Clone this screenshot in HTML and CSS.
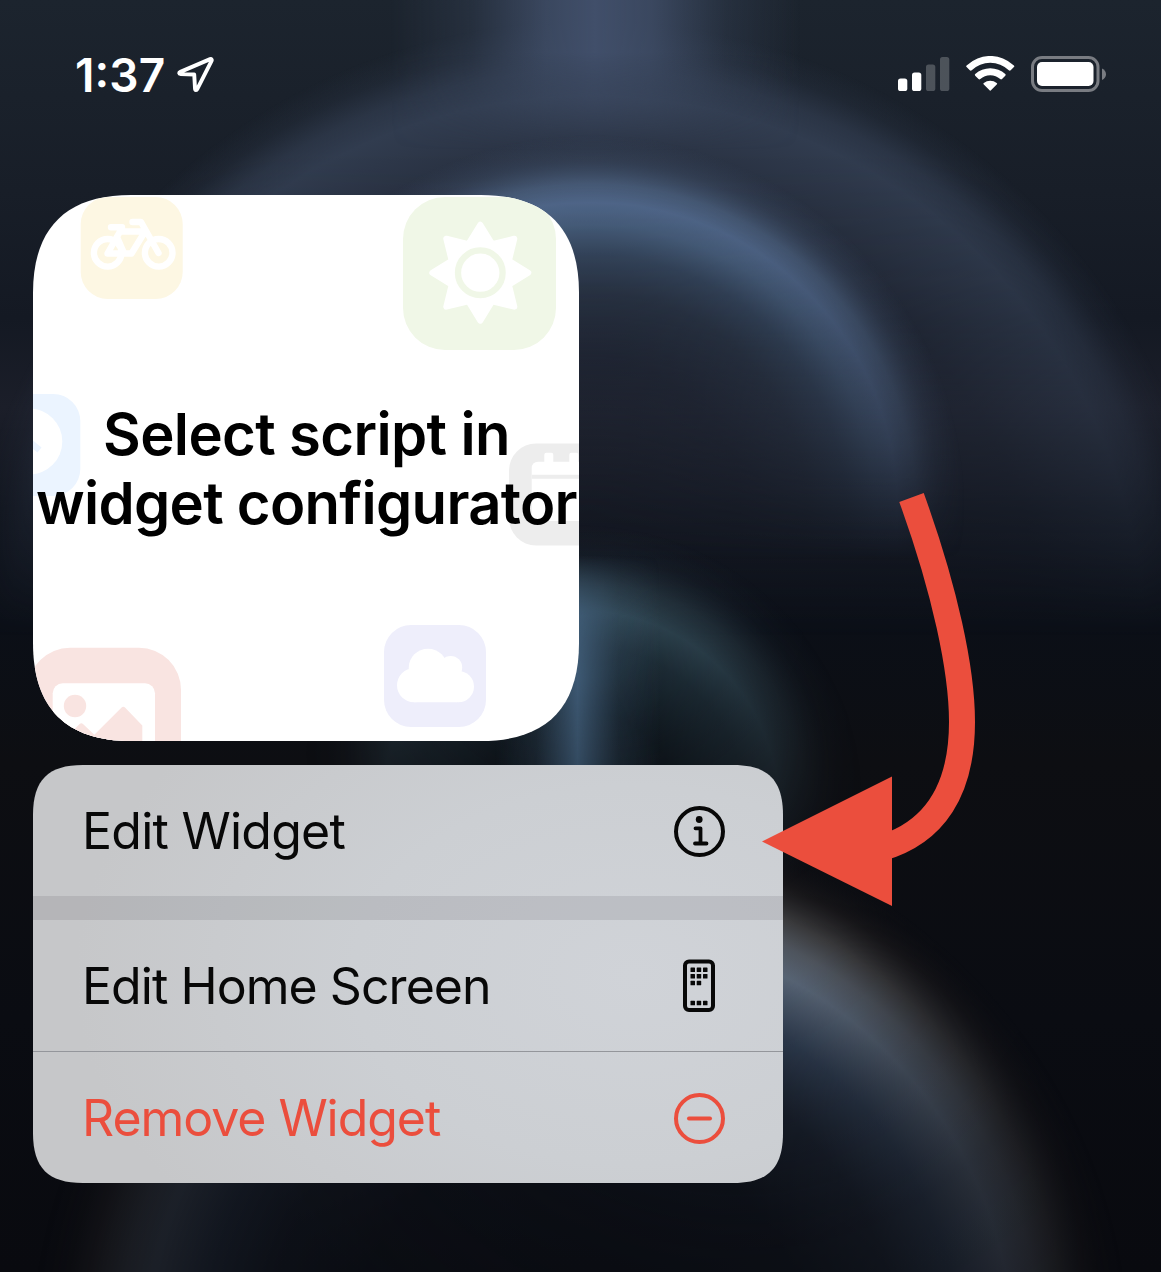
FILE: index.html
```html
<!DOCTYPE html>
<html lang="en">
<head>
<meta charset="utf-8">
<title>Home Screen</title>
<link rel="stylesheet" href="styles.css">
</head>
<body>
<main class="screen">
  <svg class="wallpaper" viewBox="0 0 1161 1272" aria-hidden="true">
    <defs>
      <linearGradient id="base" x1="0" y1="0" x2="0" y2="1">
        <stop offset="0" stop-color="#1c242e"/><stop offset=".15" stop-color="#181e28"/>
        <stop offset=".25" stop-color="#141923"/><stop offset=".32" stop-color="#1b1e29"/>
        <stop offset=".4" stop-color="#11151e"/><stop offset=".49" stop-color="#0b0f17"/>
        <stop offset=".6" stop-color="#0d0e12"/><stop offset=".8" stop-color="#0a0c12"/>
        <stop offset="1" stop-color="#090a0f"/>
      </linearGradient>
      <linearGradient id="beam">
        <stop offset="0" stop-color="#3f4d66" stop-opacity="0"/><stop offset=".2" stop-color="#3f4d66" stop-opacity=".3"/>
        <stop offset=".38" stop-color="#404e68" stop-opacity=".85"/><stop offset=".5" stop-color="#414f6a"/>
        <stop offset=".64" stop-color="#404e68" stop-opacity=".85"/><stop offset=".82" stop-color="#3f4d66" stop-opacity=".3"/>
        <stop offset="1" stop-color="#3f4d66" stop-opacity="0"/>
      </linearGradient>
      <linearGradient id="beamFade" x1="0" y1="0" x2="0" y2="1">
        <stop offset=".35" stop-color="#fff"/><stop offset="1" stop-color="#000"/>
      </linearGradient>
      <mask id="beamMask"><rect width="1161" height="150" fill="url(#beamFade)"/></mask>
      <radialGradient id="disc" gradientUnits="userSpaceOnUse" cx="590" cy="650" r="630">
        <stop offset="0" stop-color="#1c202b"/><stop offset=".55" stop-color="#1f2431"/>
        <stop offset=".72" stop-color="#242b3a"/><stop offset=".8" stop-color="#2b3445"/>
        <stop offset=".88" stop-color="#313c4f"/><stop offset=".92" stop-color="#313c4f" stop-opacity=".75"/>
        <stop offset=".96" stop-color="#313c4f" stop-opacity=".25"/><stop offset="1" stop-color="#313c4f" stop-opacity="0"/>
      </radialGradient>
      <linearGradient id="discFade" x1="0" y1="0" x2="0" y2="1">
        <stop offset=".12" stop-color="#fff"/><stop offset=".22" stop-color="#cecece"/>
        <stop offset=".3" stop-color="#989898"/><stop offset=".36" stop-color="#707070"/><stop offset=".5" stop-color="#000"/>
      </linearGradient>
      <mask id="discMask"><rect width="1161" height="1272" fill="url(#discFade)"/></mask>
      <radialGradient id="ring" gradientUnits="userSpaceOnUse" cx="590" cy="510" r="375">
        <stop offset="0" stop-color="#1f2330" stop-opacity=".4"/><stop offset=".4" stop-color="#222938" stop-opacity=".8"/>
        <stop offset=".58" stop-color="#2a3546"/><stop offset=".68" stop-color="#35465d"/>
        <stop offset=".76" stop-color="#475e7c"/><stop offset=".82" stop-color="#50678a"/>
        <stop offset=".87" stop-color="#4b607e" stop-opacity=".85"/><stop offset=".93" stop-color="#42536d" stop-opacity=".4"/>
        <stop offset="1" stop-color="#3a4860" stop-opacity="0"/>
      </radialGradient>
      <linearGradient id="fade" x1="0" y1="0" x2="0" y2="1">
        <stop offset=".14" stop-color="#fff"/><stop offset=".2" stop-color="#e0e0e0"/>
        <stop offset=".29" stop-color="#989898"/><stop offset=".35" stop-color="#686868"/><stop offset=".44" stop-color="#000"/>
      </linearGradient>
      <mask id="upper"><rect width="1161" height="1272" fill="url(#fade)"/></mask>
      <radialGradient id="planet" gradientUnits="userSpaceOnUse" cx="580" cy="1360" r="550">
        <stop offset="0" stop-color="#0b0e15"/><stop offset=".42" stop-color="#10151e"/>
        <stop offset=".58" stop-color="#1c2431"/><stop offset=".69" stop-color="#303e52"/>
        <stop offset=".79" stop-color="#5a6778"/><stop offset=".84" stop-color="#50565f"/>
        <stop offset=".885" stop-color="#3a3a3c"/><stop offset=".94" stop-color="#1c1a1c" stop-opacity=".7"/>
        <stop offset="1" stop-color="#0e0e12" stop-opacity="0"/>
      </radialGradient>
      <radialGradient id="light" gradientUnits="userSpaceOnUse" cx="740" cy="880" r="560">
        <stop offset="0" stop-color="#fff"/><stop offset=".2" stop-color="#f4f4f4"/><stop offset=".32" stop-color="#d0d0d0"/>
        <stop offset=".45" stop-color="#a0a0a0"/><stop offset=".65" stop-color="#686868"/><stop offset="1" stop-color="#3c3c3c"/>
      </radialGradient>
      <mask id="lit"><rect width="1161" height="1272" fill="url(#light)"/></mask>
      <radialGradient id="teal" gradientUnits="userSpaceOnUse" cx="580" cy="810" r="285">
        <stop offset="0" stop-color="#0e151b"/><stop offset=".35" stop-color="#101a21"/>
        <stop offset=".58" stop-color="#20313b"/><stop offset=".7" stop-color="#304753"/>
        <stop offset=".8" stop-color="#30444f" stop-opacity=".65"/><stop offset=".9" stop-color="#293a46" stop-opacity=".2"/>
        <stop offset="1" stop-color="#22303a" stop-opacity="0"/>
      </radialGradient>
      <radialGradient id="tealLight" gradientUnits="userSpaceOnUse" cx="600" cy="590" r="350">
        <stop offset="0" stop-color="#fff"/><stop offset=".35" stop-color="#c8c8c8"/><stop offset=".7" stop-color="#606060"/><stop offset="1" stop-color="#000"/>
      </radialGradient>
      <mask id="tealMask"><rect width="1161" height="1272" fill="url(#tealLight)"/></mask>
      <linearGradient id="streak">
        <stop offset="0" stop-color="#3f5a74" stop-opacity="0"/><stop offset=".25" stop-color="#3f5a74" stop-opacity=".3"/>
        <stop offset=".5" stop-color="#425f7b"/><stop offset=".75" stop-color="#3f5a74" stop-opacity=".3"/>
        <stop offset="1" stop-color="#3f5a74" stop-opacity="0"/>
      </linearGradient>
      <linearGradient id="streakFade" gradientUnits="userSpaceOnUse" x1="0" y1="555" x2="0" y2="800">
        <stop offset="0" stop-color="#000"/><stop offset=".25" stop-color="#ddd"/><stop offset=".5" stop-color="#e8e8e8"/><stop offset="1" stop-color="#aaa"/>
      </linearGradient>
      <mask id="streakMask"><rect x="480" y="555" width="200" height="245" fill="url(#streakFade)"/></mask>
    </defs>
    <rect width="1161" height="1272" fill="url(#base)"/>
    <g mask="url(#discMask)"><circle cx="590" cy="650" r="630" fill="url(#disc)"/></g>
    <g mask="url(#beamMask)"><rect x="390" width="410" height="150" fill="url(#beam)"/></g>
    <g mask="url(#upper)"><circle cx="590" cy="510" r="375" fill="url(#ring)"/></g>
    <g mask="url(#tealMask)"><circle cx="580" cy="810" r="285" fill="url(#teal)"/></g>
    <g mask="url(#streakMask)"><rect x="495" y="555" width="165" height="245" fill="url(#streak)"/></g>
    <g mask="url(#lit)"><circle cx="580" cy="1360" r="550" fill="url(#planet)"/></g>
  </svg>

  <header class="status">
    <div class="status-left">
      <span class="time">1:37</span>
      <svg class="location" width="37" height="38" viewBox="0 0 38 38"><path d="M34 2.700 3.500 15.800c-1.800.8-1.500 2.200.3 2.300L17.700 18.500 18.500 33c.1 1.800 1.600 2 2.400.3L35.500 4.600c.6-1.300-.2-2.400-1.500-1.900Z"/></svg>
    </div>
    <div class="status-right">
      <svg width="52" height="36" viewBox="0 0 52 36"><g fill="#fff"><rect y="22.500" width="9.300" height="12.500" rx="2.600"/><rect x="14" y="16.500" width="9.300" height="18.500" rx="2.600"/><g opacity=".22"><rect x="28" y="8.500" width="9.300" height="26.500" rx="2.600"/><rect x="42" y="1" width="9.300" height="34" rx="2.600"/></g></g></svg>
      <svg width="49" height="37" viewBox="0 0 49 37"><g fill="#fff"><path d="M.6 11.1a1.2 1.2 0 0 1 0-1.7 34.3 34.3 0 0 1 47.3 0 1.2 1.2 0 0 1 0 1.7l-3.2 3.2a1.4 1.4 0 0 1-1.9 0 26.8 26.8 0 0 0-37.1 0 1.4 1.4 0 0 1-1.9 0Z"/><path d="M9.2 19.8a1.2 1.2 0 0 1 0-1.7 22.2 22.2 0 0 1 30.1 0 1.2 1.2 0 0 1 0 1.7l-3.3 3.3a1.4 1.4 0 0 1-1.8 0 14.8 14.8 0 0 0-19.9 0 1.4 1.4 0 0 1-1.8 0Z"/><path d="M17.8 28.5a1 1 0 0 1 0-1.6 10.3 10.3 0 0 1 12.9 0 1 1 0 0 1 0 1.6l-5.500 5.600a1.200 1.200 0 0 1-1.900 0Z"/></g></svg>
      <svg width="76" height="36" viewBox="0 0 76 36"><rect x="1.5" y="1.5" width="65.5" height="33" rx="9.5" fill="none" stroke="#797c82" stroke-width="3"/><rect x="6" y="6" width="56.5" height="24" rx="5" fill="#fff"/><path d="M71 12.5c5.300 2.200 5.300 9.300 0 11.500Z" fill="#797c82"/></svg>
    </div>
  </header>

  <section class="widget">
    <svg class="widget-art" viewBox="0 0 546 546" aria-hidden="true">
      <rect x="47.7" y="2" width="102" height="102" rx="27" fill="#fdf7e3"/>
      <g fill="none" stroke="#fff" stroke-width="6.4" stroke-linecap="round" stroke-linejoin="round">
        <circle cx="74.7" cy="57.8" r="13.8"/><circle cx="125.7" cy="57.8" r="13.8"/>
        <path d="M78 32.300h11M87 36.500h25L98.500 58.500H74.500L87 36.500M84 42l6.500 15M99.500 27h8.500l17.500 31"/>
      </g>
      <rect x="370" y="2" width="153" height="153" rx="42" fill="#f0f7e7"/>
      <g transform="translate(447.3 77.7)">
        <path d="M0-48 11.900-28.600 34-34 28.600-11.900 48 0 28.600 11.900 34 34 11.900 28.600 0 48-11.900 28.600-34 34-28.600 11.900-48 0-28.600-11.900-34-34-11.900-28.600Z" fill="#fff" stroke="#fff" stroke-width="6" stroke-linejoin="round"/>
        <circle r="22.300" fill="none" stroke="#f0f7e7" stroke-width="6.300"/>
      </g>
      <rect x="-54.7" y="199" width="102" height="102" rx="27" fill="#ebf4ff"/>
      <circle cx="-3.7" cy="246.5" r="33" fill="#fff"/>
      <path d="M-4 246.500 6.500 255" stroke="#ebf4ff" stroke-width="6.500"/>
      <rect x="476" y="248.500" width="102" height="102" rx="27" fill="#ededed"/>
      <path d="M511.300 266.700v-7q0-2 2-2h5q2 0 2 2v7h16v-7q0-2 2-2h5q2 0 2 2v7h14v59.300h-54q-6.600 0-6.600-6.600v-46q0-6.700 6.600-6.700Z" fill="#fff"/>
      <path d="M498.700 281.700h60" stroke="#ededed" stroke-width="4"/>
      <rect x="-5" y="452.700" width="153" height="153" rx="42" fill="#f9e4e1"/>
      <rect x="19.700" y="488.300" width="102.300" height="80" rx="10" fill="#fff"/>
      <circle cx="42" cy="511" r="11.200" fill="#f9e4e1"/>
      <path d="M32.700 550v-7l13.900-13.900q1.700-1.700 3.400 0L61.300 539.700 88.600 512.600q1.700-1.700 3.400 0l17.300 18V550Z" fill="#f9e4e1"/>
      <rect x="351" y="430" width="102" height="102" rx="27" fill="#eeeefb"/>
      <g fill="#fff"><circle cx="381" cy="490.300" r="17"/><circle cx="395" cy="488" r="15"/><circle cx="395" cy="473" r="19.300"/><circle cx="417.700" cy="472.500" r="11.500"/><circle cx="425.300" cy="491.600" r="15.700"/><path d="M381 480h43v27.300h-43Z"/></g>
    </svg>
    <h1 class="widget-title"><span class="line-one">Select script in</span><br><span class="line-two">widget configurator</span></h1>
  </section>

  <nav class="menu">
    <div class="menu-item"><span class="label-widget">Edit Widget</span>
      <svg width="52" height="52" viewBox="-.5 -.5 52 52"><circle cx="26" cy="26" r="23.500" fill="none" stroke="#080808" stroke-width="4"/><circle cx="25.700" cy="14" r="3.400" fill="#080808"/><path d="M22 22.800h5V37M21.500 38h11.500" fill="none" stroke="#080808" stroke-width="3.800" stroke-linecap="round" stroke-linejoin="round"/></svg>
    </div>
    <div class="menu-gap"></div>
    <div class="menu-item"><span class="label-home">Edit Home Screen</span>
      <svg width="52" height="54" viewBox="-.5 0 52 54"><rect x="11.500" y="2.500" width="28" height="48.500" rx="4" fill="none" stroke="#080808" stroke-width="4"/><g fill="#080808"><rect x="17" y="8.500" width="4.500" height="4.500" rx=".6"/><rect x="23.200" y="8.500" width="4.500" height="4.500" rx=".6"/><rect x="29.500" y="8.500" width="4.500" height="4.500" rx=".6"/><rect x="17" y="15" width="4.500" height="4.500" rx=".6"/><rect x="23.200" y="15" width="4.500" height="4.500" rx=".6"/><rect x="29.500" y="15" width="4.500" height="4.500" rx=".6"/><rect x="17" y="21.800" width="4.500" height="4.500" rx=".6"/><rect x="23.200" y="21.800" width="4.500" height="4.500" rx=".6"/><rect x="17" y="41.800" width="4.500" height="4.500" rx=".6"/><rect x="23.200" y="41.800" width="4.500" height="4.500" rx=".6"/><rect x="29.500" y="41.800" width="4.500" height="4.500" rx=".6"/></g></svg>
    </div>
    <div class="menu-item menu-item-danger"><span class="label-remove">Remove Widget</span>
      <svg width="52" height="52" viewBox="-.5 -.5 52 52"><g fill="none" stroke="#eb4e3d" stroke-width="4" stroke-linecap="round"><circle cx="26" cy="26" r="23.500"/><path d="M15.500 26h21"/></g></svg>
    </div>
  </nav>

  <svg class="arrow" viewBox="0 0 230 430" aria-hidden="true">
    <path d="M156.500 17.500C190 110 207 190 207 242 207 310 180 353 125 368.500" fill="none" stroke="#eb4e3d" stroke-width="26"/>
    <path d="M7 361.500 137 296.500v129.500Z" fill="#eb4e3d"/>
  </svg>
</main>
</body>
</html>
```
FILE: styles.css
```css
* { box-sizing: border-box; }
body { margin: 0; background: #0b0d13; font-family: Inter, "Liberation Sans", sans-serif; }
svg { display: block; flex: none; }

.screen {
  position: relative;
  width: 1161px;
  height: 1272px;
  overflow: hidden;
  padding: 0 33px;
  display: flex;
  flex-direction: column;
  align-items: flex-start;
}
.wallpaper { position: absolute; inset: 0; width: 1161px; height: 1272px; }

.status {
  position: relative;
  align-self: stretch;
  height: 195px;
  padding: 54px 21px 0 42px;
  display: flex;
  justify-content: space-between;
  align-items: flex-start;
  color: #fff;
}
.status-left { display: flex; align-items: center; gap: 12px; height: 42px; }
.time {
  margin-top: -1px;
  font-size: 46px;
  font-weight: 600;
  line-height: 42px;
  letter-spacing: .1px;
  font-feature-settings: "case";
}
.location path { fill: none; stroke: #fff; stroke-width: 4; stroke-linejoin: round; }
.status-right { display: flex; align-items: center; gap: 16px; height: 40px; }

.widget {
  position: relative;
  width: 546px;
  height: 546px;
  background: #fff;
  display: flex;
  align-items: center;
  justify-content: center;
  clip-path: path("M0 98C0 33 33 0 98 0H448C513 0 546 33 546 98V448C546 513 513 546 448 546H98C33 546 0 513 0 448Z");
}
.widget-art { position: absolute; inset: 0; width: 546px; height: 546px; }
.widget-title {
  position: relative;
  margin: 0;
  padding: 1px 0 0 1px;
  font-size: 58px;
  font-weight: 600;
  line-height: 69px;
  text-align: center;
  white-space: nowrap;
  color: #000;
}
.line-one { letter-spacing: -.62px; }
.line-two { letter-spacing: -.7px; }

.menu {
  position: relative;
  width: 750px;
  height: 418px;
  margin-top: 24px;
  overflow: hidden;
  background: radial-gradient(ellipse 620px 420px at 600px 210px, #d0d3d8 0%, #cccfd3 45%, #c6c7c9 90%);
  clip-path: path("M0 50C0 15 15 0 50 0H700C735 0 750 15 750 50V368C750 403 735 418 700 418H50C15 418 0 403 0 368Z");
  color: #080808;
}
.menu-item {
  height: 131px;
  padding: 0 58px 0 49px;
  display: flex;
  align-items: center;
  justify-content: space-between;
  font-size: 50px;
  line-height: 60px;
  white-space: nowrap;
}
.label-widget { letter-spacing: -.75px; }
.label-home { letter-spacing: -.95px; }
.label-remove { letter-spacing: -1.05px; }
.menu-gap { height: 24px; background: rgba(60, 60, 67, .12); }
.menu-item-danger { height: 132px; border-top: 1px solid #94969b; color: #eb4e3d; }

.arrow { position: absolute; left: 755px; top: 480px; width: 230px; height: 430px; }
```
